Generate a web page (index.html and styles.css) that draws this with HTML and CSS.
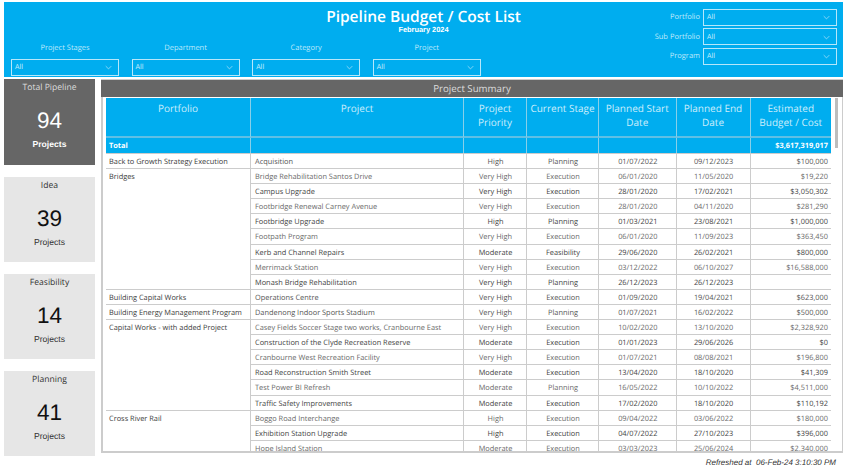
FILE: index.html
```html
<!DOCTYPE html>
<html lang="en">
<head>
<meta charset="utf-8">
<title>Pipeline Budget / Cost List</title>
<link rel="stylesheet" href="styles.css">
</head>
<body>
<div class="page">
  <header class="band">
    <div class="headline">
      <h1>Pipeline Budget / Cost List</h1>
      <p>February 2024</p>
    </div>
    <div class="side-filters">
      <div class="side-filter"><label>Portfolio</label><div class="select"><span>All</span><svg viewBox="0 0 10 6"><path d="M1 1l4 4 4-4"/></svg></div></div>
      <div class="side-filter"><label>Sub Portfolio</label><div class="select"><span>All</span><svg viewBox="0 0 10 6"><path d="M1 1l4 4 4-4"/></svg></div></div>
      <div class="side-filter"><label>Program</label><div class="select"><span>All</span><svg viewBox="0 0 10 6"><path d="M1 1l4 4 4-4"/></svg></div></div>
    </div>
    <div class="filters">
      <div class="filter"><label>Project Stages</label><div class="select"><span>All</span><svg viewBox="0 0 10 6"><path d="M1 1l4 4 4-4"/></svg></div></div>
      <div class="filter"><label>Department</label><div class="select"><span>All</span><svg viewBox="0 0 10 6"><path d="M1 1l4 4 4-4"/></svg></div></div>
      <div class="filter"><label>Category</label><div class="select"><span>All</span><svg viewBox="0 0 10 6"><path d="M1 1l4 4 4-4"/></svg></div></div>
      <div class="filter"><label>Project</label><div class="select"><span>All</span><svg viewBox="0 0 10 6"><path d="M1 1l4 4 4-4"/></svg></div></div>
    </div>
  </header>
  <main class="content">
    <aside class="kpis">
      <div class="kpi kpi-total"><h2>Total Pipeline</h2><strong>94</strong><span>Projects</span></div>
      <div class="kpi"><h2>Idea</h2><strong>39</strong><span>Projects</span></div>
      <div class="kpi"><h2>Feasibility</h2><strong>14</strong><span>Projects</span></div>
      <div class="kpi"><h2>Planning</h2><strong>41</strong><span>Projects</span></div>
    </aside>
    <section class="panel">
      <h2 class="panel-title">Project Summary</h2>
      <div class="panel-body">
        <div class="matrix">
          <div class="hd">Portfolio</div><div class="hd">Project</div><div class="hd">Project Priority</div><div class="hd">Current Stage</div><div class="hd">Planned Start Date</div><div class="hd">Planned End Date</div><div class="hd">Estimated Budget / Cost</div>
          <div class="tot tot-first">Total</div><div class="tot"></div><div class="tot"></div><div class="tot"></div><div class="tot"></div><div class="tot"></div><div class="tot num">$3,617,319,017</div>

          <div class="c pf">Back to Growth Strategy Execution</div><div class="c">Acquisition</div><div class="c ctr">High</div><div class="c ctr">Planning</div><div class="c ctr">01/07/2022</div><div class="c ctr">09/12/2023</div><div class="c num">$100,000</div>

          <div class="c pf span8">Bridges</div><div class="c lt">Bridge Rehabilitation Santos Drive</div><div class="c ctr lt">Very High</div><div class="c ctr lt">Execution</div><div class="c ctr lt">06/01/2020</div><div class="c ctr lt">11/05/2020</div><div class="c num lt">$19,220</div>
          <div class="c dk">Campus Upgrade</div><div class="c ctr dk">Very High</div><div class="c ctr dk">Execution</div><div class="c ctr dk">28/01/2020</div><div class="c ctr dk">17/02/2021</div><div class="c num dk">$3,050,302</div>
          <div class="c lt">Footbridge Renewal Carney Avenue</div><div class="c ctr lt">Very High</div><div class="c ctr lt">Execution</div><div class="c ctr lt">28/01/2020</div><div class="c ctr lt">04/11/2020</div><div class="c num lt">$281,290</div>
          <div class="c dk">Footbridge Upgrade</div><div class="c ctr dk">High</div><div class="c ctr dk">Planning</div><div class="c ctr dk">01/03/2021</div><div class="c ctr dk">23/08/2021</div><div class="c num dk">$1,000,000</div>
          <div class="c lt">Footpath Program</div><div class="c ctr lt">Very High</div><div class="c ctr lt">Execution</div><div class="c ctr lt">06/01/2020</div><div class="c ctr lt">11/09/2023</div><div class="c num lt">$363,450</div>
          <div class="c dk">Kerb and Channel Repairs</div><div class="c ctr dk">Moderate</div><div class="c ctr dk">Feasibility</div><div class="c ctr dk">29/06/2020</div><div class="c ctr dk">26/02/2021</div><div class="c num dk">$800,000</div>
          <div class="c lt">Merrimack Station</div><div class="c ctr lt">Very High</div><div class="c ctr lt">Execution</div><div class="c ctr lt">03/12/2022</div><div class="c ctr lt">06/10/2027</div><div class="c num lt">$16,588,000</div>
          <div class="c dk">Monash Bridge Rehabilitation</div><div class="c ctr dk">Very High</div><div class="c ctr dk">Planning</div><div class="c ctr dk">26/12/2023</div><div class="c ctr dk">26/12/2023</div><div class="c num dk"></div>

          <div class="c pf">Building Capital Works</div><div class="c">Operations Centre</div><div class="c ctr">Very High</div><div class="c ctr">Execution</div><div class="c ctr">01/09/2020</div><div class="c ctr">19/04/2021</div><div class="c num">$623,000</div>
          <div class="c pf">Building Energy Management Program</div><div class="c">Dandenong Indoor Sports Stadium</div><div class="c ctr">Very High</div><div class="c ctr">Planning</div><div class="c ctr">01/07/2021</div><div class="c ctr">16/02/2022</div><div class="c num">$500,000</div>

          <div class="c pf span6">Capital Works - with added Project</div><div class="c lt">Casey Fields Soccer Stage two works, Cranbourne East</div><div class="c ctr lt">Very High</div><div class="c ctr lt">Execution</div><div class="c ctr lt">10/02/2020</div><div class="c ctr lt">13/10/2020</div><div class="c num lt">$2,328,920</div>
          <div class="c dk">Construction of the Clyde Recreation Reserve</div><div class="c ctr dk">Moderate</div><div class="c ctr dk">Execution</div><div class="c ctr dk">01/01/2023</div><div class="c ctr dk">29/06/2026</div><div class="c num dk">$0</div>
          <div class="c lt">Cranbourne West Recreation Facility</div><div class="c ctr lt">Very High</div><div class="c ctr lt">Execution</div><div class="c ctr lt">01/07/2021</div><div class="c ctr lt">08/08/2021</div><div class="c num lt">$196,800</div>
          <div class="c dk">Road Reconstruction Smith Street</div><div class="c ctr dk">Moderate</div><div class="c ctr dk">Execution</div><div class="c ctr dk">13/04/2020</div><div class="c ctr dk">18/10/2020</div><div class="c num dk">$41,309</div>
          <div class="c lt">Test Power BI Refresh</div><div class="c ctr lt">Moderate</div><div class="c ctr lt">Planning</div><div class="c ctr lt">16/05/2022</div><div class="c ctr lt">10/10/2022</div><div class="c num lt">$4,511,000</div>
          <div class="c dk">Traffic Safety Improvements</div><div class="c ctr dk">Moderate</div><div class="c ctr dk">Execution</div><div class="c ctr dk">17/02/2020</div><div class="c ctr dk">18/10/2020</div><div class="c num dk">$110,192</div>

          <div class="c pf span3">Cross River Rail</div><div class="c lt">Boggo Road Interchange</div><div class="c ctr lt">High</div><div class="c ctr lt">Execution</div><div class="c ctr lt">09/04/2022</div><div class="c ctr lt">03/06/2022</div><div class="c num lt">$180,000</div>
          <div class="c dk">Exhibition Station Upgrade</div><div class="c ctr dk">High</div><div class="c ctr dk">Execution</div><div class="c ctr dk">04/07/2022</div><div class="c ctr dk">27/10/2023</div><div class="c num dk">$396,000</div>
          <div class="c lt">Hope Island Station</div><div class="c ctr lt">Moderate</div><div class="c ctr lt">Execution</div><div class="c ctr lt">03/03/2023</div><div class="c ctr lt">25/06/2024</div><div class="c num lt">$2,340,000</div>
        </div>
        <div class="scrollbar"><div class="thumb"></div></div>
      </div>
      <footer class="refreshed">Refreshed at&nbsp; 06-Feb-24 3:10:30 PM</footer>
    </section>
  </main>
</div>
</body>
</html>
```
FILE: styles.css
```css
* { box-sizing: border-box; margin: 0; padding: 0; }
html, body { background: #fff; width: 852px; height: 470px; overflow: hidden; }
body { font-family: "Open Sans", "Noto Sans", sans-serif; text-rendering: geometricPrecision; }
.page { padding: 2px 9px 0 4px; }

.band {
  height: 75px;
  background: #00adef;
  color: #fff;
  display: grid;
  grid-template-rows: 41px 34px;
}
.headline { grid-area: 1 / 1; text-align: center; padding-top: 5px; }
.headline h1 { font-size: 15.5px; line-height: 18px; font-weight: 600; }
.headline p { font: bold 7.4px/8px "Liberation Sans", sans-serif; margin-top: 1px; }
.side-filters {
  grid-area: 1 / 1 / 3 / 2;
  justify-self: end;
  padding: 7px 6px 0 0;
  display: flex;
  flex-direction: column;
  gap: 2.8px;
}
.side-filter { display: flex; align-items: center; justify-content: flex-end; gap: 3px; }
.side-filter label { font-size: 7.5px; color: #bfe9fb; }
.side-filter .select { width: 134px; flex: none; }
.filters {
  grid-area: 2 / 1;
  display: flex;
  gap: 12.6px;
  padding: 0 0 1.5px 7px;
  align-items: flex-end;
}
.filter { width: 108px; display: flex; flex-direction: column; align-items: center; gap: 6px; }
.filter label { font-size: 7.5px; line-height: 10px; color: #bfe9fb; }
.filter .select { width: 100%; }
.select {
  height: 16.7px;
  border: 1px solid #b5e7fb;
  display: flex;
  align-items: center;
  justify-content: space-between;
  padding: 1px 6px 0 3px;
  font-size: 7px;
  color: #cdeefc;
}
.select svg { width: 7px; height: 5px; fill: none; stroke: #cdeefc; stroke-width: .9; }

.content { display: flex; gap: 6px; margin-top: 2px; }
.kpis { width: 91px; flex: none; display: flex; flex-direction: column; gap: 12px; }
.kpi {
  height: 85px;
  background: #e6e6e6;
  color: #333;
  display: flex;
  flex-direction: column;
  align-items: center;
  padding-top: 2px;
  font-family: "Liberation Sans", sans-serif;
}
.kpi h2 { font: 400 8.6px/12px "Open Sans", sans-serif; }
.kpi strong { font-weight: 400; font-size: 22.5px; line-height: 26px; margin-top: 15px; color: #111; }
.kpi span { font-size: 8.6px; line-height: 11px; margin-top: 5px; }
.kpi-total { background: #666; color: #fff; height: 86px; }
.kpi-total h2 { color: #ddd; }
.kpi-total strong { color: #fff; }
.kpi-total span { font-weight: 700; }

.panel { flex: none; width: 742px; }
.panel-title {
  height: 18px;
  background: #666;
  color: #ddd;
  font-size: 9.7px;
  line-height: 17px;
  font-weight: 400;
  text-align: center;
  border-top: 1px solid #ccc;
}
.panel-body {
  height: 356px;
  border: solid #ccc;
  border-width: 0 1px 2px 2px;
  padding: 1px 0 0 3px;
  display: flex;
  gap: 4px;
  overflow: hidden;
}
.matrix {
  width: 725px;
  flex: none;
  display: grid;
  grid-template-columns: 144px 213px 63px 72px 77.5px 74px 81.5px;
  grid-template-rows: 40px 15px;
  grid-auto-rows: 15.1px;
  font-size: 7.4px;
  color: #555;
  overflow: hidden;
  align-content: start;
}
.hd {
  background: #00adef;
  color: #cdeefc;
  font-size: 10px;
  line-height: 14px;
  text-align: center;
  padding: 3px 2px 0;
  border-left: 1px solid #88cfe9;
  border-bottom: 2px solid #5fbfe4;
}
.hd:first-child { border-left: 0; }
.tot {
  background: #00adef;
  color: #fff;
  font-weight: 700;
  line-height: 15px;
  padding: 1px 3px 0;
  border-left: 1px solid #88cfe9;
}
.tot-first { border-left: 0; }
.c {
  line-height: 14px;
  padding: 1px 3px 0 4px;
  border-top: 1px solid #ccc;
  border-left: 1px solid #ccc;
  white-space: nowrap;
}
.pf { border-left: 0; color: #3c3c3c; padding-left: 3px; }
.ctr { text-align: center; }
.num { text-align: right; padding-right: 3px; }
.lt { color: #6a6a6a; }
.dk { color: #444; }
.span8 { grid-row: span 8; }
.span6 { grid-row: span 6; }
.span3 { grid-row: span 3; }

.scrollbar { width: 3px; flex: none; }
.thumb { height: 50px; background: #bdbdbd; }

.refreshed {
  text-align: right;
  font: italic 8px/12px "Liberation Sans", sans-serif;
  color: #333;
  padding: 4px 7px 0 0;
}
```
